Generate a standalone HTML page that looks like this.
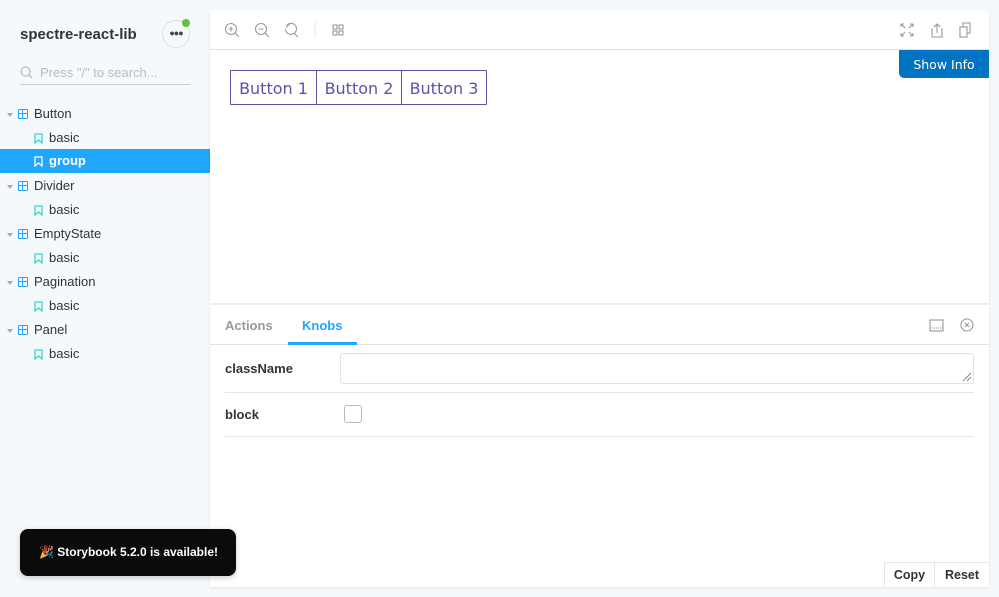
<!DOCTYPE html>
<html><head><meta charset="utf-8"><style>
*{box-sizing:border-box;margin:0;padding:0}
body{width:999px;height:597px;background:#f6f9fc;font-family:"Liberation Sans",sans-serif;position:relative;overflow:hidden;color:#333}
.abs{position:absolute}
.title{left:20px;top:26px;font-weight:bold;font-size:15px;color:#333}
.menu{left:162px;top:20px;width:28px;height:28px;border-radius:50%;border:1px solid #ddd;text-align:center;line-height:24px;font-size:9px;color:#444;background:#f6f9fc;letter-spacing:-1px}
.dot{left:182px;top:19px;width:8px;height:8px;border-radius:50%;background:#66bf3c}
.search{left:20px;top:60px;width:170px;height:25px;border-bottom:1px solid #ccc;font-size:13px;color:#bbb;padding-left:20px;line-height:25px}
.row{position:absolute;left:0;width:210px;height:24px;line-height:24px;font-size:13px;color:#333}
.row.sel{background:#1ea7fd;color:#fff;font-weight:bold}
.arrow{position:absolute;left:7px;top:11px;width:0;height:0;border-left:3px solid transparent;border-right:3px solid transparent;border-top:4px solid #aaa}
.grid{position:absolute;left:18px;top:7px;width:10px;height:10px;border:1.5px solid #1ea7fd;border-radius:1px}
.grid:before{content:"";position:absolute;left:3px;top:-1px;width:1px;height:9px;background:#1ea7fd}
.grid:after{content:"";position:absolute;top:3px;left:-1px;height:1px;width:9px;background:#1ea7fd}
.bm{position:absolute;left:34px;top:7px}
.card{background:#fff;left:210px;width:779px;box-shadow:0 1px 3px rgba(0,0,0,.08)}
.btns{left:230px;top:70px;display:flex;border:1px solid #5955a6;border-radius:1px}
.btns div{width:85px;height:33px;line-height:35px;text-align:center;font-family:"DejaVu Sans",sans-serif;font-size:16px;color:#5955a6}
.btns div+div{border-left:1px solid #5955a6}
.label{font-size:13px;font-weight:bold;color:#333}
</style></head><body>
<div class="abs title">spectre-react-lib</div>
<div class="abs menu">●●●</div>
<div class="abs dot"></div>
<div class="abs search">Press "/" to search...
<svg class="abs" style="left:0;top:6px" width="13" height="13" viewBox="0 0 13 13"><circle cx="5.5" cy="5.5" r="4.5" fill="none" stroke="#bbb" stroke-width="1.3"/><path d="M9 9l3 3" stroke="#bbb" stroke-width="1.3"/></svg></div>

<div class="row" style="top:102px"><i class="arrow"></i><i class="grid"></i><span style="margin-left:34px">Button</span></div>
<div class="row" style="top:126px"><svg class="bm" width="9" height="11" viewBox="0 0 9 11"><path d="M1 1h7v9l-3.5-3l-3.5 3z" fill="none" stroke="#37d5d3" stroke-width="1.3"/></svg><span style="margin-left:49px">basic</span></div>
<div class="row sel" style="top:149px"><svg class="bm" width="9" height="11" viewBox="0 0 9 11"><path d="M1 1h7v9l-3.5-3l-3.5 3z" fill="none" stroke="#fff" stroke-width="1.3"/></svg><span style="margin-left:49px">group</span></div>
<div class="row" style="top:174px"><i class="arrow"></i><i class="grid"></i><span style="margin-left:34px">Divider</span></div>
<div class="row" style="top:198px"><svg class="bm" width="9" height="11" viewBox="0 0 9 11"><path d="M1 1h7v9l-3.5-3l-3.5 3z" fill="none" stroke="#37d5d3" stroke-width="1.3"/></svg><span style="margin-left:49px">basic</span></div>
<div class="row" style="top:222px"><i class="arrow"></i><i class="grid"></i><span style="margin-left:34px">EmptyState</span></div>
<div class="row" style="top:246px"><svg class="bm" width="9" height="11" viewBox="0 0 9 11"><path d="M1 1h7v9l-3.5-3l-3.5 3z" fill="none" stroke="#37d5d3" stroke-width="1.3"/></svg><span style="margin-left:49px">basic</span></div>
<div class="row" style="top:270px"><i class="arrow"></i><i class="grid"></i><span style="margin-left:34px">Pagination</span></div>
<div class="row" style="top:294px"><svg class="bm" width="9" height="11" viewBox="0 0 9 11"><path d="M1 1h7v9l-3.5-3l-3.5 3z" fill="none" stroke="#37d5d3" stroke-width="1.3"/></svg><span style="margin-left:49px">basic</span></div>
<div class="row" style="top:318px"><i class="arrow"></i><i class="grid"></i><span style="margin-left:34px">Panel</span></div>
<div class="row" style="top:342px"><svg class="bm" width="9" height="11" viewBox="0 0 9 11"><path d="M1 1h7v9l-3.5-3l-3.5 3z" fill="none" stroke="#37d5d3" stroke-width="1.3"/></svg><span style="margin-left:49px">basic</span></div>

<div class="abs card" style="top:10px;height:293px;border-radius:4px 4px 0 0">
 <div style="height:40px;border-bottom:1px solid #e2e2e2;position:relative">
  <svg class="abs" style="left:14px;top:12px" width="120" height="16" viewBox="0 0 120 16" fill="none" stroke="#999" stroke-width="1.1">
   <circle cx="7" cy="7" r="5.5"/><path d="M11 11l4 4M4.5 7h5M7 4.5v5"/>
   <circle cx="37" cy="7" r="5.5"/><path d="M41 11l4 4M34.5 7h5"/>
   <path d="M63 3a5.5 5.5 0 1 1 -1.5 4M63 3l0 3M63 3h3M70 11l4 4"/>
   <path d="M91 0v16" stroke="#e5e5e5"/>
   <rect x="109" y="3" width="4" height="4"/><rect x="115" y="3" width="4" height="4"/><rect x="109" y="9" width="4" height="4"/><rect x="115" y="9" width="4" height="4"/>
  </svg>
  <svg class="abs" style="left:689px;top:12px" width="80" height="16" viewBox="0 0 80 16" fill="none" stroke="#999" stroke-width="1.1">
   <path d="M2 2l4 4M2 2h3M2 2v3M14 2l-4 4M14 2h-3M14 2v3M2 14l4-4M2 14h3M2 14v-3M14 14l-4-4M14 14h-3M14 14v-3"/>
   <path d="M38 2v9M35 5l3-3 3 3M34 7h-1v8h10v-8h-1"/>
   <rect x="61" y="5" width="7" height="10"/><path d="M64 5V1h7v10h-3"/>
  </svg>
 </div>
 <div class="abs" style="right:0;top:40px;width:90px;height:28px;background:#0074c2;color:#fff;font-family:'DejaVu Sans',sans-serif;font-size:12.5px;text-align:center;line-height:29px;border-radius:0 0 0 5px">Show Info</div>
</div>
<div class="abs btns"><div>Button 1</div><div>Button 2</div><div>Button 3</div></div>

<div class="abs card" style="top:305px;height:282px">
 <div style="height:40px;border-bottom:1px solid #e2e2e2;position:relative;font-size:13px;font-weight:bold">
  <span class="abs" style="left:15px;top:13px;color:#999">Actions</span>
  <span class="abs" style="left:92px;top:13px;color:#1ea7fd">Knobs</span>
  <div class="abs" style="left:78px;top:37px;width:69px;height:3px;background:#1ea7fd"></div>
  <svg class="abs" style="left:718px;top:13px" width="50" height="16" viewBox="0 0 50 16" fill="none" stroke="#999" stroke-width="1.1">
   <rect x="2" y="2" width="13" height="11"/><path d="M2 10h13" stroke-dasharray="1 1"/>
   <circle cx="39" cy="7" r="6"/><path d="M37 5l4 4M41 5l-4 4"/>
  </svg>
 </div>
 <div class="abs label" style="left:15px;top:56px">className</div>
 <div class="abs" style="left:130px;top:48px;width:634px;height:31px;border:1px solid #e2e2e2;border-radius:3px"></div>
 <svg class="abs" style="left:750px;top:65px" width="12" height="12" viewBox="0 0 12 12" stroke="#888" stroke-width="1"><path d="M11 3L3 11M11 7L7 11"/></svg>
 <div class="abs" style="left:15px;top:87px;width:749px;height:1px;background:#e6e6e6"></div>
 <div class="abs label" style="left:15px;top:102px">block</div>
 <div class="abs" style="left:134px;top:100px;width:18px;height:18px;border:1px solid #bbb;border-radius:3px"></div>
 <div class="abs" style="left:15px;top:131px;width:749px;height:1px;background:#e6e6e6"></div>
 <div class="abs" style="left:674px;top:257px;width:105px;height:25px;border:1px solid #e6e6e6;border-right:none;border-bottom:none;display:flex;font-size:12.5px;font-weight:bold;color:#333">
  <div style="width:50px;text-align:center;line-height:24px;border-right:1px solid #e6e6e6">Copy</div>
  <div style="flex:1;text-align:center;line-height:24px">Reset</div>
 </div>
</div>

<div class="abs" style="left:20px;top:529px;width:216px;height:47px;background:#0b0b0b;border-radius:8px;color:#fff;font-size:12px;font-weight:bold;line-height:47px;padding-left:19px;box-shadow:0 2px 6px rgba(0,0,0,.2)">🎉 Storybook 5.2.0 is available!</div>
</body></html>
